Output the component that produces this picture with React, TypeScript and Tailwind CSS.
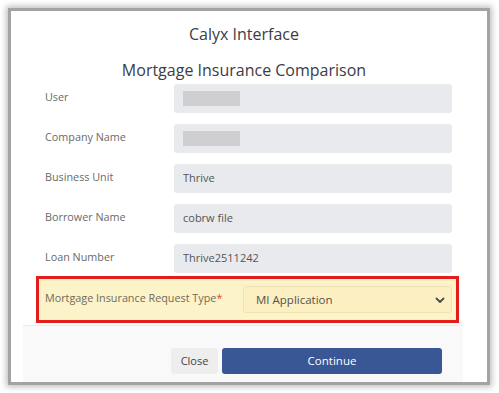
import React from 'react';

const rows = [
  { label: 'User', value: '', masked: true },
  { label: 'Company Name', value: '', masked: true },
  { label: 'Business Unit', value: 'Thrive' },
  { label: 'Borrower Name', value: 'cobrw file' },
  { label: 'Loan Number', value: 'Thrive2511242' },
];

const App: React.FC = () => {
  return (
    <div className="w-[499px] h-[393px] bg-white pt-[8px] pl-[8px] font-['Open_Sans',sans-serif]">
      <div className="w-[482px] h-[377px] border-[3px] border-[#a3a3a3] bg-white shadow-[0_0_6px_2px_rgba(0,0,0,0.25)] flex flex-col">
        <h1 className="pt-[13px] pr-[10px] text-center text-[16px] leading-[20px] font-medium text-[#3c3c46]">
          Calyx Interface
        </h1>
        <h2 className="mt-[15px] pr-[10px] text-center text-[16px] leading-[22px] font-medium text-[#3c3c46]">
          Mortgage Insurance Comparison
        </h2>

        <div className="mt-[3px] flex flex-col gap-[11px]">
          {rows.map((row) => (
            <div key={row.label} className="flex items-center pl-[34px]">
              <span className="w-[129px] text-[10.8px] text-[#6a6a6a] -mt-[2px]">{row.label}</span>
              <div className="w-[278px] h-[29px] rounded-[3px] bg-[#e8eaed] flex items-center px-[9px]">
                {row.masked ? (
                  <div className="w-[57px] h-[15px] bg-[#cfcfd1]" />
                ) : (
                  <span className="text-[11px] text-[#555]">{row.value}</span>
                )}
              </div>
            </div>
          ))}
        </div>

        <div className="ml-[25px] mt-[3px] w-[423px] border-[3px] border-[#e41c1c] bg-[#fdf3c8] flex items-center pl-[6px] pr-[4px] py-[7px]">
          <span className="w-[198px] text-[10.8px] text-[#6e6a5a] -mt-[2px]">
            Mortgage Insurance Request Type<span className="text-[#e0463c]">*</span>
          </span>
          <div className="w-[209px] h-[27px] rounded-[3px] border border-[#efe3b3] bg-[#fcefc2] flex items-center justify-between pl-[12px] pr-[5px]">
            <span className="text-[11.5px] text-[#55524a]">MI Application</span>
            <svg width="12" height="12" viewBox="0 0 12 12">
              <path d="M2.5 4.5 L6 8 L9.5 4.5" fill="none" stroke="#4a4a4a" strokeWidth="1.8" strokeLinecap="round" strokeLinejoin="round" />
            </svg>
          </div>
        </div>

        <div className="ml-[12px] mt-[2px] w-[440px] flex-1 border-t border-[#ececec] bg-[#f9f9f9] flex justify-end items-start pt-[22px] pr-[21px] gap-[4px]">
          <button className="w-[47px] h-[26px] rounded-[3px] bg-[#eeeeee] text-[11px] text-[#444] font-medium">
            Close
          </button>
          <button className="w-[220px] h-[26px] rounded-[3px] bg-[#3a5795] text-[11.5px] text-white font-medium">
            Continue
          </button>
        </div>
      </div>
    </div>
  );
};

export default App;
